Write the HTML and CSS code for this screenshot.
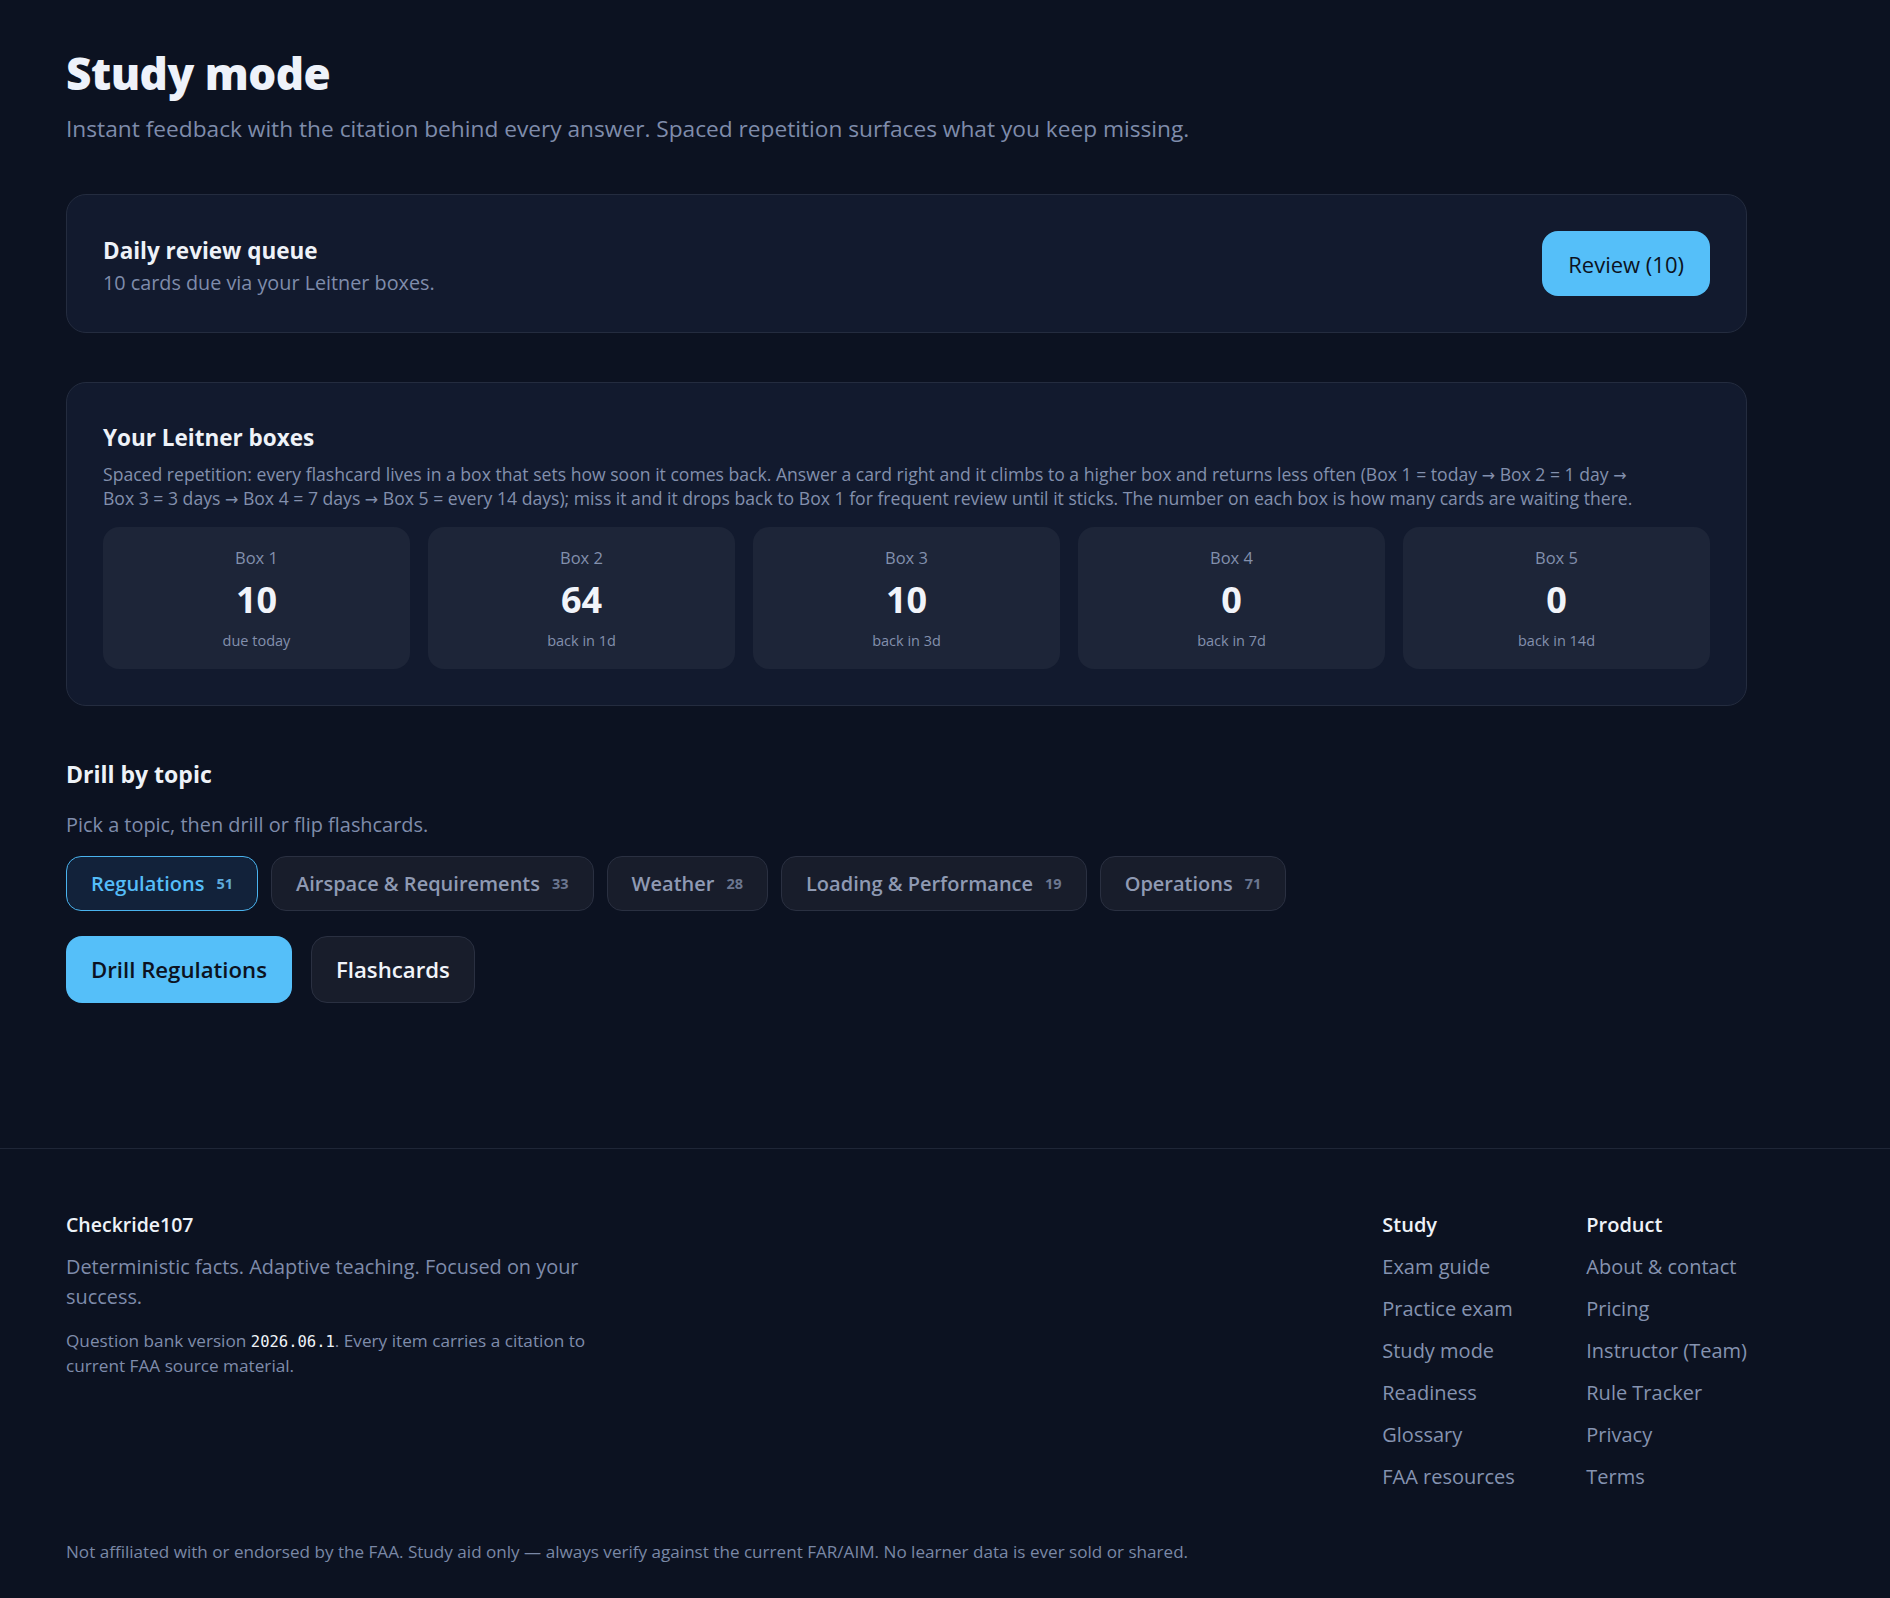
FILE: index.html
```html
<!DOCTYPE html>
<html lang="en">
<head>
<meta charset="utf-8">
<title>Study mode · Checkride107</title>
<link rel="stylesheet" href="styles.css">
</head>
<body>
<main class="shell main">
  <header class="intro">
    <h1 class="page-title">Study mode</h1>
    <p class="page-lede">Instant feedback with the citation behind every answer. Spaced repetition surfaces what you keep missing.</p>
  </header>

  <section class="card queue">
    <div class="queue-text">
      <h2 class="card-title">Daily review queue</h2>
      <p class="queue-sub">10 cards due via your Leitner boxes.</p>
    </div>
    <button class="btn btn-primary btn-review" type="button">Review (10)</button>
  </section>

  <section class="card leitner">
    <h2 class="card-title leitner-title">Your Leitner boxes</h2>
    <p class="leitner-desc">Spaced repetition: every flashcard lives in a box that sets how soon it comes back. Answer a card right and it climbs to a higher box and returns less often (<span class="step">Box 1 = today</span> <span class="arrow">→</span> <span class="step">Box 2 = 1 day</span> <span class="arrow">→</span> <span class="step">Box 3 = 3 days</span> <span class="arrow">→</span> <span class="step">Box 4 = 7 days</span> <span class="arrow">→</span> <span class="step">Box 5 = every 14 days</span>); miss it and it drops back to Box 1 for frequent review until it sticks. The number on each box is how many cards are waiting there.</p>
    <div class="boxes">
      <div class="box"><span class="box-label">Box 1</span><span class="box-count">10</span><span class="box-when">due today</span></div>
      <div class="box"><span class="box-label">Box 2</span><span class="box-count">64</span><span class="box-when">back in 1d</span></div>
      <div class="box"><span class="box-label">Box 3</span><span class="box-count">10</span><span class="box-when">back in 3d</span></div>
      <div class="box"><span class="box-label">Box 4</span><span class="box-count">0</span><span class="box-when">back in 7d</span></div>
      <div class="box"><span class="box-label">Box 5</span><span class="box-count">0</span><span class="box-when">back in 14d</span></div>
    </div>
  </section>

  <section class="drill">
    <h2 class="card-title drill-title">Drill by topic</h2>
    <p class="drill-sub">Pick a topic, then drill or flip flashcards.</p>
    <div class="chips">
      <button class="chip chip-active" type="button">Regulations <span class="chip-count">51</span></button>
      <button class="chip" type="button">Airspace &amp; Requirements <span class="chip-count">33</span></button>
      <button class="chip" type="button">Weather <span class="chip-count">28</span></button>
      <button class="chip" type="button">Loading &amp; Performance <span class="chip-count">19</span></button>
      <button class="chip" type="button">Operations <span class="chip-count">71</span></button>
    </div>
    <div class="actions">
      <button class="btn btn-primary btn-action" type="button">Drill Regulations</button>
      <button class="btn btn-ghost btn-action" type="button">Flashcards</button>
    </div>
  </section>
</main>

<footer class="site-footer">
  <div class="shell footer-inner">
    <div class="footer-top">
      <div class="footer-brand">
        <div class="brand-name">Checkride107</div>
        <p class="brand-tagline">Deterministic facts. Adaptive teaching. Focused on your success.</p>
        <p class="brand-version">Question bank version <code>2026.06.1</code>. Every item carries a citation to current FAA source material.</p>
      </div>
      <nav class="footer-nav">
        <div class="footer-col">
          <div class="footer-head">Study</div>
          <a href="#">Exam guide</a>
          <a href="#">Practice exam</a>
          <a href="#">Study mode</a>
          <a href="#">Readiness</a>
          <a href="#">Glossary</a>
          <a href="#">FAA resources</a>
        </div>
        <div class="footer-col">
          <div class="footer-head">Product</div>
          <a href="#">About &amp; contact</a>
          <a href="#">Pricing</a>
          <a href="#">Instructor (Team)</a>
          <a href="#">Rule Tracker</a>
          <a href="#">Privacy</a>
          <a href="#">Terms</a>
        </div>
      </nav>
    </div>
    <p class="disclaimer">Not affiliated with or endorsed by the FAA. Study aid only — always verify against the current FAR/AIM. No learner data is ever sold or shared.</p>
  </div>
</footer>
</body>
</html>
```

FILE: styles.css
```css
* {
  box-sizing: border-box;
}

html,
body {
  margin: 0;
  background: #0c1221;
}

body {
  font-family: "Open Sans", "Noto Sans", "Liberation Sans", sans-serif;
  color: #eef2f8;
  -webkit-font-smoothing: antialiased;
}

p,
h1,
h2 {
  margin: 0;
}

button {
  font-family: inherit;
  cursor: pointer;
}

.shell {
  width: 1747px;
  padding-left: 66px;
}

/* ---------- intro ---------- */
.main {
  padding-top: 47px;
}

.page-title {
  font-size: 44px;
  line-height: 52px;
  font-weight: 800;
  letter-spacing: -0.5px;
  color: #eef2fa;
}

.page-lede {
  margin-top: 14px;
  font-size: 22.7px;
  line-height: 31px;
  color: #7f8cab;
}

/* ---------- cards ---------- */
.card {
  background: #121a2e;
  border: 1px solid #242c3f;
  border-radius: 20px;
  padding: 36px;
}

.card-title {
  font-size: 22.5px;
  line-height: 30px;
  font-weight: 700;
  color: #eef2f8;
}

.queue {
  margin-top: 50px;
  display: flex;
  align-items: center;
  justify-content: space-between;
}

.queue-text {
  padding-top: 5px;
}

.queue-sub {
  margin-top: 3px;
  font-size: 19.8px;
  line-height: 27px;
  color: #7f8cab;
}

.btn {
  border: 1px solid transparent;
  border-radius: 16px;
  display: inline-flex;
  align-items: center;
  justify-content: center;
  padding: 0 24px;
  white-space: nowrap;
}

.btn-primary {
  background: #55bff9;
  color: #0c1221;
}

.btn-review {
  height: 65px;
  font-size: 22px;
  font-weight: 500;
  padding: 0 25px;
}

.leitner {
  margin-top: 49px;
}

.leitner-title {
  line-height: 38px;
}

.leitner-desc {
  margin-top: 5px;
  font-size: 17.6px;
  line-height: 24px;
  color: #8390ad;
}

/* each interval step stays on one line */
.step {
  white-space: nowrap;
}

.arrow {
  font-family: "DejaVu Sans", sans-serif;
  font-size: 16px;
  line-height: 0;
}

.boxes {
  margin-top: 17px;
  display: grid;
  grid-template-columns: repeat(5, 1fr);
  gap: 18px;
}

.box {
  background: #1d2538;
  border-radius: 16px;
  padding: 19px 16px 18px;
  display: flex;
  flex-direction: column;
  align-items: center;
  text-align: center;
}

.box-label {
  font-size: 16.5px;
  line-height: 24px;
  color: #8390ad;
}

.box-count {
  margin-top: 8px;
  font-size: 36px;
  line-height: 44px;
  font-weight: 700;
  color: #f1f4fa;
}

.box-when {
  margin-top: 9px;
  font-size: 14.5px;
  line-height: 20px;
  color: #8390ad;
}

/* ---------- drill ---------- */
.drill {
  margin-top: 53px;
}

.drill-title {
  font-size: 23px;
}

.drill-sub {
  margin-top: 22px;
  font-size: 19.9px;
  line-height: 28px;
  color: #7f8cab;
}

.chips {
  margin-top: 17px;
  display: flex;
  flex-wrap: wrap;
  gap: 13px;
}

.chip {
  height: 55px;
  padding: 0 24px;
  border-radius: 15px;
  border: 1px solid #2a3041;
  background: #181d2b;
  color: #8f9ab3;
  font-size: 20px;
  font-weight: 600;
  display: inline-flex;
  align-items: center;
  gap: 12px;
}

.chip-count {
  font-size: 14.5px;
  font-weight: 700;
  color: #6b768f;
}

.chip-active {
  background: #12223a;
  border-color: #4ab3ee;
  color: #55bdf8;
}

.chip-active .chip-count {
  color: #5fabdc;
}

.actions {
  margin-top: 25px;
  display: flex;
  gap: 19px;
}

.btn-action {
  height: 67px;
  font-size: 22.2px;
  font-weight: 600;
}

.btn-ghost {
  background: #181d2b;
  border-color: #2a3041;
  color: #f1f4fa;
}

/* ---------- footer ---------- */
.site-footer {
  margin-top: 145px;
  border-top: 1px solid #1f2637;
  padding-top: 61px;
  padding-bottom: 40px;
}

.footer-top {
  display: flex;
  justify-content: space-between;
  align-items: flex-start;
}

.footer-brand {
  max-width: 520px;
}

.brand-name {
  font-size: 19.5px;
  line-height: 30px;
  font-weight: 600;
  color: #eef2f8;
}

.brand-tagline {
  margin-top: 12px;
  font-size: 19.9px;
  line-height: 30px;
  color: #7f8cab;
}

.brand-version {
  margin-top: 16px;
  font-size: 17.2px;
  line-height: 25px;
  color: #7f8cab;
}

.brand-version code {
  font-family: "DejaVu Sans Mono", "Liberation Mono", monospace;
  font-size: 15.5px;
  line-height: 0;
  color: #eef2f8;
}

.footer-nav {
  display: grid;
  grid-template-columns: 140px auto;
  column-gap: 64px;
}

.footer-col {
  display: flex;
  flex-direction: column;
  gap: 12px;
}

.footer-head {
  font-size: 20px;
  line-height: 30px;
  font-weight: 600;
  color: #eef2f8;
}

.footer-col a {
  font-size: 20px;
  line-height: 30px;
  color: #8593b0;
  text-decoration: none;
  white-space: nowrap;
}

.disclaimer {
  margin-top: 48px;
  font-size: 17.1px;
  line-height: 24px;
  color: #7a88a6;
}
```
